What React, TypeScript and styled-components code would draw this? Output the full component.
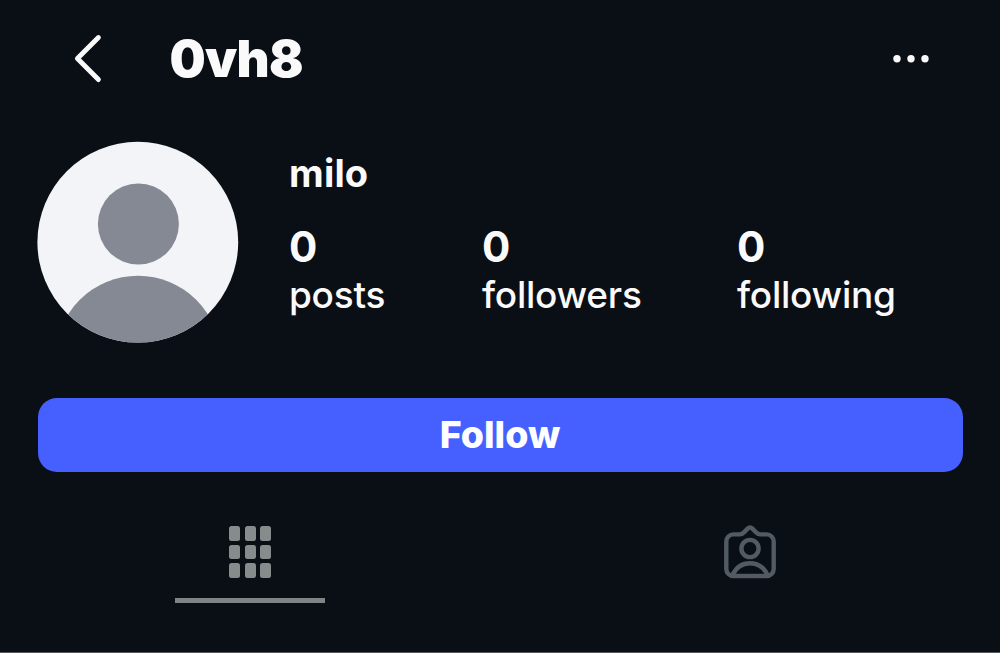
import styled, { createGlobalStyle } from 'styled-components';

interface Stat {
  label: string
  value: number
}

const stats: Stat[] = [
  { label: 'posts', value: 0 },
  { label: 'followers', value: 0 },
  { label: 'following', value: 0 },
]

const BackIcon = () => <svg width='30' height='50' viewBox='0 0 30 50' fill='none'>
  <path d='M25.4 3.6 4.4 24.6 25.4 45.6' stroke='#fafafa' strokeWidth='4.9' strokeLinecap='round' strokeLinejoin='round' />
</svg>

const MoreIcon = () => <svg width='36' height='8' viewBox='0 0 36 8' fill='#fafafa'>
  <circle cx='4' cy='3.7' r='3.7' />
  <circle cx='18' cy='3.7' r='3.7' />
  <circle cx='32' cy='3.7' r='3.7' />
</svg>

const DefaultAvatar = () => <svg width='202' height='202' viewBox='0 0 202 202'>
  <clipPath id='avatar'>
    <circle cx='100.8' cy='101.2' r='100.4' />
  </clipPath>
  <g clipPath='url(#avatar)'>
    <rect width='202' height='202' fill='#f2f4f7' />
    <circle cx='101.4' cy='83' r='40.5' fill='#848994' />
    <circle cx='101' cy='217' r='82.3' fill='#848994' />
  </g>
</svg>

const TaggedIcon = () => <svg width='52' height='54' viewBox='0 0 52 54' fill='none' stroke='#525a62' strokeWidth='4.4' strokeLinejoin='round'>
  <path d='M9.3 9.4h6.5c1.6 0 2.900-.7 3.900-1.800l3.900-4c1.400-1.400 3.400-1.400 4.800 0l3.900 4c1 1.100 2.300 1.800 3.900 1.800h6.500a7 7 0 0 1 7 7v27.600a7 7 0 0 1-7 7H9.300a7 7 0 0 1-7-7V16.400a7 7 0 0 1 7-7z' />
  <circle cx='26' cy='23.5' r='8.6' />
  <path d='M8.5 50c3.500-7.500 10-11.800 17.500-11.800S40 42.500 43.500 50' />
</svg>

export default function App() {
  return <>
    <GlobalStyle />
    <Page>
      <Header>
        <IconButton aria-label='Back'><BackIcon /></IconButton>
        <Username>0vh8</Username>
        <IconButton aria-label='More options'><MoreIcon /></IconButton>
      </Header>
      <Profile>
        <DefaultAvatar />
        <Details>
          <DisplayName>milo</DisplayName>
          <Stats>
            {stats.map(x => <StatItem key={x.label}>
              <StatValue>{x.value}</StatValue>
              <StatLabel>{x.label}</StatLabel>
            </StatItem>)}
          </Stats>
        </Details>
      </Profile>
      <FollowButton>Follow</FollowButton>
      <Tabs>
        <Tab aria-label='Posts' $active>
          <PostsGrid>
            {Array.from({ length: 9 }, (_, i) => <GridCell key={i} />)}
          </PostsGrid>
        </Tab>
        <Tab aria-label='Tagged'>
          <TaggedIcon />
        </Tab>
      </Tabs>
    </Page>
  </>
}

const GlobalStyle = createGlobalStyle`
  * {
    box-sizing: border-box;
  }

  body {
    margin: 0;
    background: #0a0e15;
    color: #fafafa;
    font-family: Inter, "Liberation Sans", sans-serif;
  }

  svg {
    display: block;
    flex-shrink: 0;
  }

  button {
    padding: 0;
    border: 0;
    background: none;
    color: inherit;
    font-family: inherit;
    cursor: pointer;
  }
`

const Page = styled.main`
  display: flex;
  flex-direction: column;
  width: 1000px;
  height: 653px;
  overflow: hidden;
  border-bottom: 1px solid #55585c;
`

const Header = styled.header`
  display: flex;
  align-items: center;
  height: 117px;
  padding: 0 71px 0 73px;
`

const IconButton = styled.button`
  flex-shrink: 0;
`

const Username = styled.h1`
  flex: 1;
  margin: 0 0 0 66.5px;
  font-size: 51px;
  font-weight: 900;
  line-height: 60px;
  letter-spacing: -.7px;
`

const Profile = styled.section`
  display: flex;
  gap: 50px;
  height: 280.5px;
  padding: 24px 0 0 37px;
`

const Details = styled.div`
  padding-top: 11px;
`

const DisplayName = styled.h2`
  margin: 0 0 29px;
  font-size: 38px;
  font-weight: 700;
  line-height: 42px;
  letter-spacing: .2px;
`

const Stats = styled.dl`
  display: grid;
  grid-template-columns: 193px 255px auto;
  margin: 0;
`

const StatItem = styled.div`
  display: flex;
  flex-direction: column;
`

const StatValue = styled.dd`
  margin: 0;
  font-size: 42px;
  font-weight: 700;
  line-height: 48px;
`

const StatLabel = styled.dt`
  font-size: 37px;
  font-weight: 500;
  line-height: 48px;
  letter-spacing: -.25px;
`

const FollowButton = styled.button`
  height: 74px;
  margin: 0 37.5px;
  border-radius: 19px;
  && {
    background: #465fff;
    color: #fff;
  }
  font-size: 37.5px;
  font-weight: 800;
  line-height: 74px;
`

const Tabs = styled.nav`
  display: grid;
  grid-template-columns: 1fr 1fr;
  height: 131.5px;
`

const Tab = styled.button<{ $active?: boolean }>`
  display: flex;
  justify-content: center;
  align-items: flex-start;
  width: 150px;
  margin: 0 auto;
  && {
    padding-top: 53.5px;
    border-bottom: 5px solid ${p => p.$active ? '#808485' : 'transparent'};
  }
`

const PostsGrid = styled.div`
  display: grid;
  grid-template-columns: repeat(3, 11px);
  grid-auto-rows: 14.5px;
  gap: 4.2px 4.6px;
  padding-top: 1px;
`

const GridCell = styled.span`
  border-radius: 2.5px;
  background: #868b8c;
`
